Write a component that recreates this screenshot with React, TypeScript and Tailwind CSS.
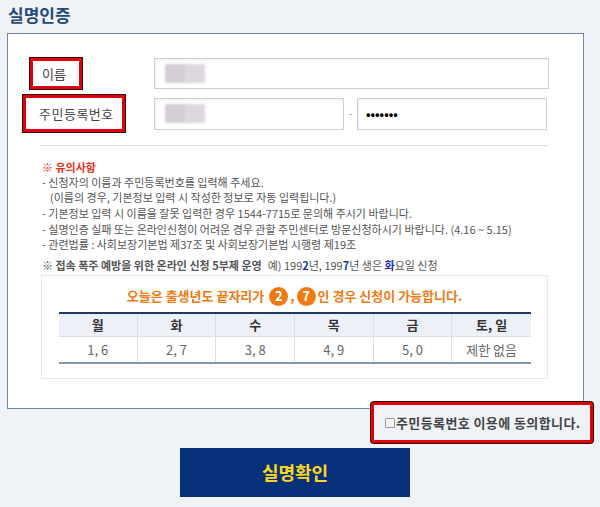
import React from 'react';

const font = "font-['Noto_Sans_CJK_KR','Noto_Sans',sans-serif]";

const days = [
  { day: '월', nums: '1, 6' },
  { day: '화', nums: '2, 7' },
  { day: '수', nums: '3, 8' },
  { day: '목', nums: '4, 9' },
  { day: '금', nums: '5, 0' },
  { day: '토, 일', nums: '제한 없음' },
];

const Redacted = () => (
  <div className="flex ml-[10px] blur-[1px]">
    <div className="w-[20px] h-[19px] bg-[#d4cfd6]" />
    <div className="w-[20px] h-[19px] bg-[#dcd8dd]" />
  </div>
);

const Badge = ({ n }: { n: string }) => (
  <span className="inline-flex items-center justify-center w-[19px] h-[19px] rounded-full bg-[#f07a12] text-white text-[13px] font-bold mx-[2px]">
    {n}
  </span>
);

export default function App() {
  return (
    <div className={`${font} w-[600px] h-[507px] bg-[#eff3f8] overflow-hidden`}>
      {/* Title */}
      <h1 className="pl-[8px] pt-[3px] h-[33px] text-[17px] font-bold text-[#27497a] leading-[24px]">
        실명인증
      </h1>

      {/* Main box */}
      <div className="ml-[7px] w-[577px] h-[376px] bg-white border border-[#6f87a6]">
        {/* Name row */}
        <div className="flex items-center mt-[24px] h-[31px]">
          <div className="w-[146px] pl-[22px]">
            <div className="w-[52px] h-[31px] border-[3px] border-[#e0000b] shadow-[0_0_0_1px_#3a0a0a] flex items-center pl-[9px] text-[13px] text-[#444]">
              이름
            </div>
          </div>
          <div className="w-[395px] h-[31px] border border-[#cfcfcf] shadow-[inset_1px_1px_2px_#eee] flex items-center">
            <Redacted />
          </div>
        </div>

        {/* SSN row */}
        <div className="flex items-center mt-[6px] h-[37px]">
          <div className="w-[146px] pl-[15px]">
            <div className="w-[102px] h-[37px] border-[3px] border-[#e0000b] shadow-[0_0_0_1px_#3a0a0a] flex items-center pl-[13px] text-[13px] text-[#444] tracking-[0.5px]">
              주민등록번호
            </div>
          </div>
          <div className="w-[190px] h-[32px] border border-[#cfcfcf] shadow-[inset_1px_1px_2px_#eee] flex items-center">
            <Redacted />
          </div>
          <span className="w-[13px] text-center text-[11px] text-[#999]">-</span>
          <div className="w-[190px] h-[32px] border border-[#cfcfcf] shadow-[inset_1px_1px_2px_#eee] flex items-center pl-[8px] text-[12px] font-bold text-black">
            •••••••
          </div>
        </div>

        <div className="ml-[32px] mr-[35px] mt-[13px] border-t border-[#dddddd]" />

        {/* Notices */}
        <div className="ml-[34px] mt-[14px] text-[11px] text-[#555] leading-[15px]">
          <p className="font-bold text-[#e8331c]">※ 유의사항</p>
          <p>- 신청자의 이름과 주민등록번호를 입력해 주세요.</p>
          <p className="pl-[8px]">(이름의 경우, 기본정보 입력 시 작성한 정보로 자동 입력됩니다.)</p>
          <p className="mt-[1px]">- 기본정보 입력 시 이름을 잘못 입력한 경우 1544-7715로 문의해 주시기 바랍니다.</p>
          <p className="mt-[1px]">- 실명인증 실패 또는 온라인신청이 어려운 경우 관할 주민센터로 방문신청하시기 바랍니다. (4.16 ~ 5.15)</p>
          <p>- 관련법률 : 사회보장기본법 제37조 및 사회보장기본법 시행령 제19조</p>
          <p className="mt-[6px]">
            <span className="font-bold">※ 접속 폭주 예방을 위한 온라인 신청 5부제 운영</span>
            <span className="ml-[6px]">
              예) 199<b className="text-[#1a2fb8]">2</b>년, 199<b className="text-[#1a2fb8]">7</b>년 생은{' '}
              <b className="text-[#1a2fb8]">화</b>요일 신청
            </span>
          </p>
        </div>

        {/* Schedule panel */}
        <div className="ml-[33px] mr-[35px] mt-[2px] h-[104px] border border-[#e6e9ee] pt-[10px]">
          <div className="flex items-center justify-center text-[13px] font-bold text-[#f07a12] h-[20px]">
            오늘은 출생년도 끝자리가
            <span className="ml-[3px]" />
            <Badge n="2" />,<Badge n="7" />
            인 경우 신청이 가능합니다.
          </div>
          <div className="ml-[17px] mr-[16px] mt-[6px] border-t-2 border-[#1d3a63] border-b-2 border-b-[#8595aa] grid grid-cols-6 text-[13px]">
            {days.map((d, i) => (
              <div
                key={d.day}
                className={i < 5 ? 'border-r border-[#d8dfe9]' : ''}
              >
                <div className="h-[23px] bg-[#edf1f7] border-b border-[#d8dfe9] flex items-center justify-center font-bold text-[#333]">
                  {d.day}
                </div>
                <div className="h-[25px] flex items-center justify-center text-[#666]">
                  {d.nums}
                </div>
              </div>
            ))}
          </div>
        </div>
      </div>

      {/* Agreement (highlighted) */}
      <div className="relative -mt-[7px] ml-[371px] w-[222px] h-[41px] border-[3px] border-[#e0000b] shadow-[0_0_0_1px_#3a0a0a] rounded-[3px] bg-[#eff3f8] flex items-center pl-[11px] text-[13px] font-bold text-[#444] tracking-[0.4px]">
        <span className="inline-block w-[10px] h-[10px] border border-[#999] bg-[#f4f4f4] rounded-[1px] mr-[1px]" />
        주민등록번호 이용에 동의합니다.
      </div>

      {/* Confirm button */}
      <div className="mt-[5px] ml-[180px] w-[230px] h-[49px] bg-[#06317a] flex items-center justify-center text-[18px] font-bold text-[#ffd71a]">
        실명확인
      </div>
    </div>
  );
}
